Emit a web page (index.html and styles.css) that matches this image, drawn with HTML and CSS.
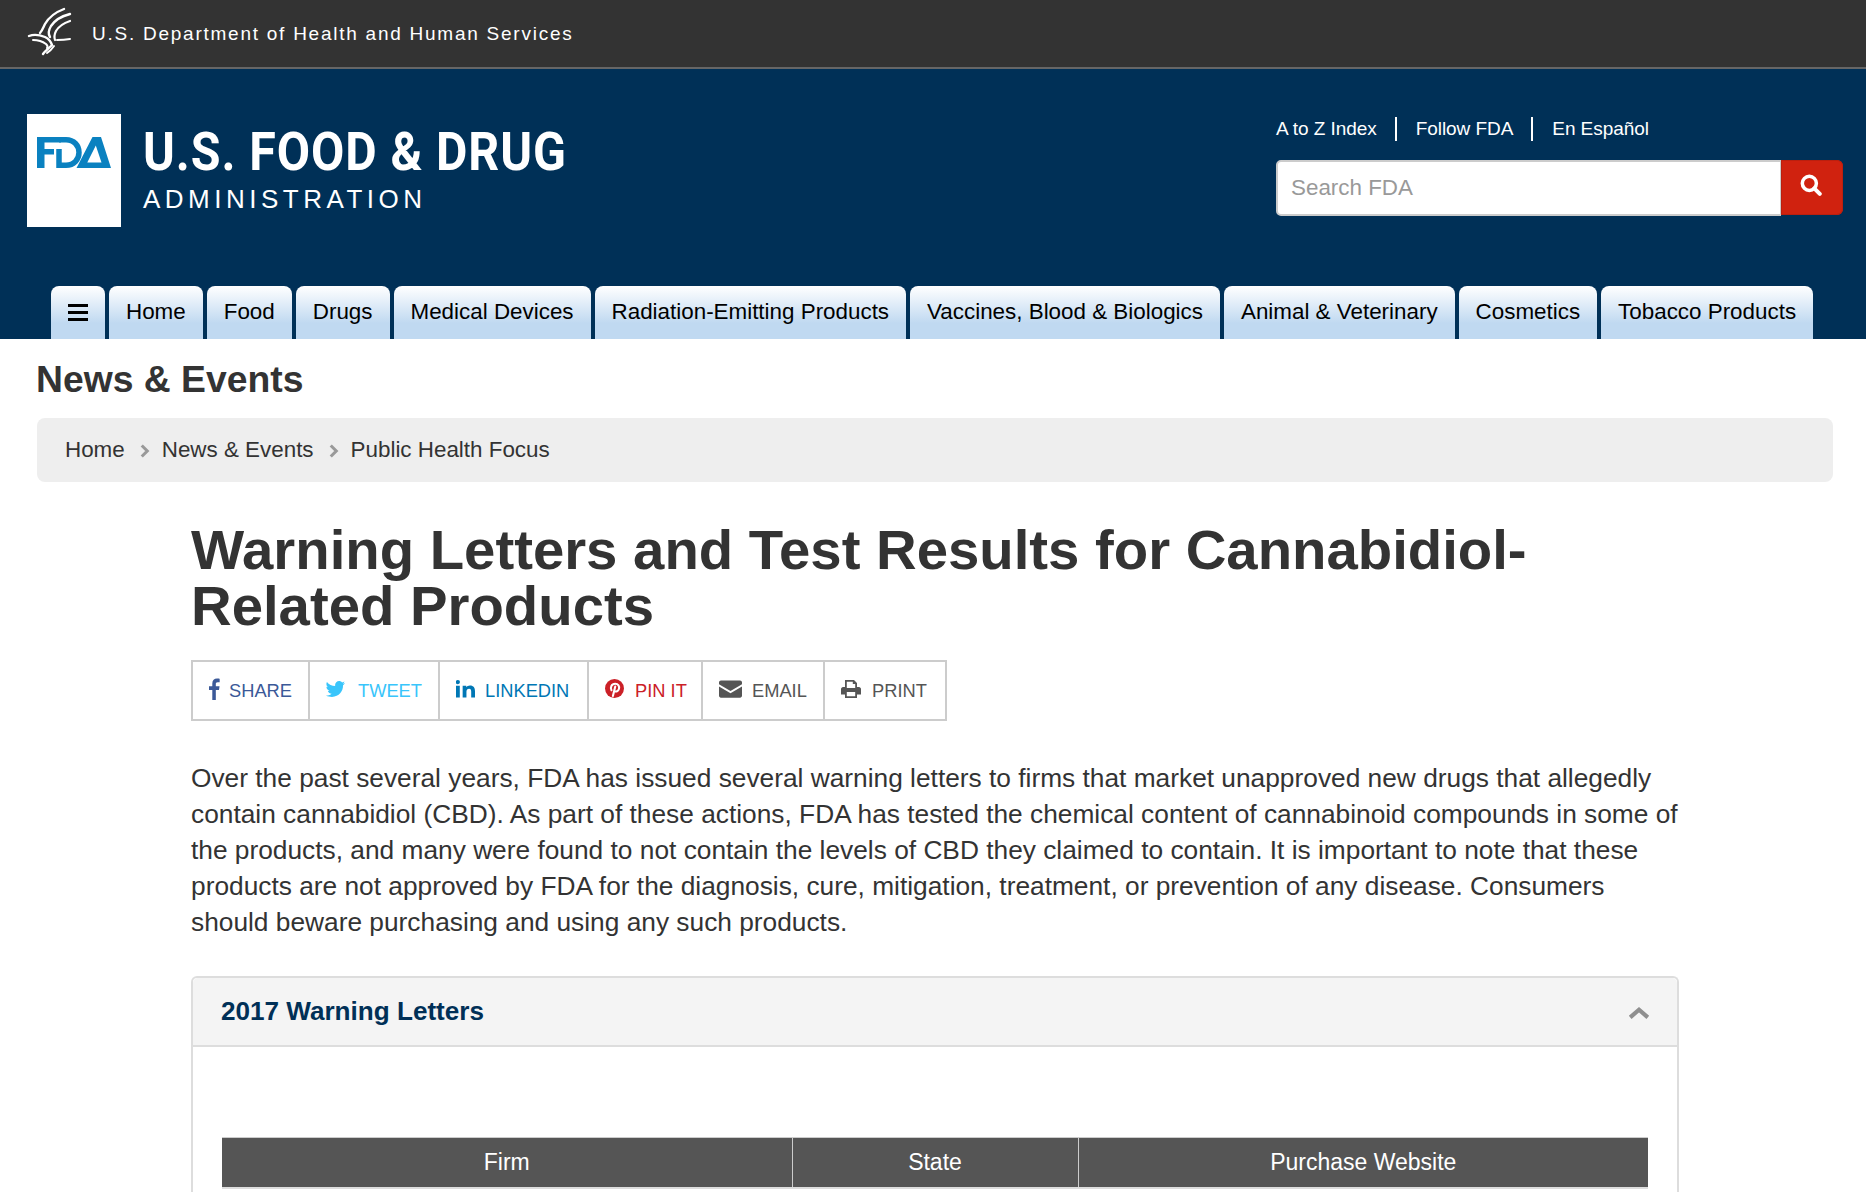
FILE: index.html
```html
<!DOCTYPE html>
<html lang="en">
<head>
<meta charset="utf-8">
<title>Warning Letters and Test Results for Cannabidiol-Related Products</title>
<link rel="stylesheet" href="styles.css">
</head>
<body>
<div class="hhs-bar">
  <svg class="eagle" viewBox="0 0 60 60" aria-hidden="true">
    <g fill="none" stroke="#fff" stroke-linecap="round" stroke-linejoin="round">
      <path d="M44 5C36 8 29 13 25 20C23 24 22 27 20 29" stroke-width="2.400"/>
      <path d="M50 10C42 12 35 16 31 22C28 27 28 30 30 33" stroke-width="2.400"/>
      <path d="M50 17C44 19 39 22 36 27C34 31 34 33 35 36" stroke-width="2.200"/>
      <path d="M9 32C14 30 20 31 25 33C29 35 31 38 32 41" stroke-width="2.400"/>
      <path d="M13 36C18 36 22 37 26 40C28 42 28 43 27 44" stroke-width="2"/>
      <path d="M37 36C41 36 44 36 50 35" stroke-width="2"/>
      <path d="M31 42C28 45 25 47 23 50" stroke-width="2.400"/>
      <path d="M34 42C32 45 30 47 27 49" stroke-width="2"/>
    </g>
  </svg>
  <span class="hhs-name">U.S. Department of Health and Human Services</span>
</div>

<header class="masthead">
  <div class="masthead-top">
    <div class="brand">
      <div class="logo-box">
        <svg class="logo-fda" viewBox="0 0 74 31" aria-hidden="true">
          <path fill="#0a81c0" d="M0 0H24V5.500H7.500V12H17V17.500H7.500V31H0Z"/>
          <path fill="none" stroke="#0a81c0" stroke-width="5.500" d="M22 12V28.200H29C37 28.200 42 22.500 42 15.500C42 8.500 37 2.800 29 2.800H22"/>
          <path fill="#0a81c0" d="M55.500 0H64L74 31H46L48.500 25.500H64.500L58.800 8.500L47.500 31H39.500Z"/>
        </svg>
      </div>
      <div class="brand-text">
        <div class="brand-title">U.S. FOOD &amp; DRUG</div>
        <div class="brand-sub">ADMINISTRATION</div>
      </div>
    </div>
    <div class="tools">
      <nav class="tool-links">
        <a>A to Z Index</a>
        <a>Follow FDA</a>
        <a>En Español</a>
      </nav>
      <form class="search">
        <div class="search-input">Search FDA</div>
        <div class="search-btn">
          <svg viewBox="0 0 20 20" class="search-icon" aria-hidden="true">
            <circle cx="8.500" cy="8.500" r="6.400" fill="none" stroke="#fff" stroke-width="3.200"/>
            <path d="M13 13L18 18" stroke="#fff" stroke-width="3.600" stroke-linecap="round"/>
          </svg>
        </div>
      </form>
    </div>
  </div>
  <nav class="tabs">
    <a class="tab tab-menu" aria-label="Menu"><span class="burger"></span></a>
    <a class="tab">Home</a>
    <a class="tab">Food</a>
    <a class="tab">Drugs</a>
    <a class="tab">Medical Devices</a>
    <a class="tab">Radiation-Emitting Products</a>
    <a class="tab">Vaccines, Blood &amp; Biologics</a>
    <a class="tab">Animal &amp; Veterinary</a>
    <a class="tab">Cosmetics</a>
    <a class="tab">Tobacco Products</a>
  </nav>
</header>

<div class="section">
  <h2 class="section-title">News &amp; Events</h2>
  <div class="crumbs">
    <a>Home</a>
    <svg class="crumb-sep" viewBox="0 0 10 14" aria-hidden="true"><path d="M2.500 2L7.500 7L2.500 12" fill="none" stroke="#999" stroke-width="2.800"/></svg>
    <a>News &amp; Events</a>
    <svg class="crumb-sep" viewBox="0 0 10 14" aria-hidden="true"><path d="M2.500 2L7.500 7L2.500 12" fill="none" stroke="#999" stroke-width="2.800"/></svg>
    <a>Public Health Focus</a>
  </div>
</div>

<main class="content">
  <h1 class="page-title">Warning Letters and Test Results for Cannabidiol-Related Products</h1>
  <ul class="share">
    <li class="share-item share-fb">
      <svg class="si si-fb" viewBox="0 0 10 20" aria-hidden="true"><path fill="currentColor" d="M3 20V11H0V7.500H3V5C3 2 4.800 .5 7.300 .5C8.500 .5 9.400 .6 9.700 .7V3.800H7.900C6.500 3.800 6.200 4.500 6.200 5.500V7.500H9.600L9.100 11H6.200V20Z"/></svg>SHARE</li>
    <li class="share-item share-tw">
      <svg class="si si-tw" viewBox="0 0 24 20" aria-hidden="true"><path fill="currentColor" d="M24 2.400C23.100 2.800 22.200 3.100 21.200 3.200C22.200 2.600 23 1.600 23.400 .5C22.400 1 21.400 1.400 20.300 1.700C19.400 .7 18.100 0 16.600 0C13.800 0 11.500 2.300 11.500 5.100C11.500 5.500 11.500 5.900 11.600 6.300C7.400 6.100 3.700 4.100 1.200 1C.8 1.800 .5 2.600 .5 3.600C.5 5.400 1.400 6.900 2.800 7.800C2 7.800 1.200 7.600 .5 7.200V7.300C.5 9.800 2.300 11.800 4.600 12.300C3.800 12.500 3 12.500 2.300 12.400C3 14.400 4.900 15.900 7.100 15.900C4.400 18 1.700 18.500 0 18.300C2.300 19.700 4.800 20 7.500 20C16.600 20 21.500 12.500 21.500 6C21.500 5.800 21.500 5.600 21.500 5.400C22.500 4.700 23.400 3.600 24 2.400Z"/></svg>TWEET</li>
    <li class="share-item share-li">
      <svg class="si si-li" viewBox="0 0 20 20" aria-hidden="true"><path fill="currentColor" d="M0 6.500H4V19H0ZM2 .5A2.200 2.200 0 1 1 2 4.900A2.200 2.200 0 1 1 2 .5ZM7 6.500H10.800V8.200C11.500 7 13 6.200 14.700 6.200C18.600 6.200 20 8.500 20 12.300V19H16V13C16 11 15.500 9.700 13.800 9.700C12 9.700 11 10.900 11 13V19H7Z"/></svg>LINKEDIN</li>
    <li class="share-item share-pin">
      <svg class="si si-pin" viewBox="0 0 20 20" aria-hidden="true"><circle cx="10" cy="10" r="10" fill="currentColor"/><path fill="none" stroke="#fff" stroke-width="2.200" stroke-linecap="round" d="M6.800 11.800C5.300 9 6.800 5 10.700 5C14 5 15.400 7.600 14.700 10.300C14 13 11.500 14 10 12.500M10.800 8L8.300 18"/></svg>PIN IT</li>
    <li class="share-item share-mail">
      <svg class="si si-mail" viewBox="0 0 24 20" aria-hidden="true"><path fill="currentColor" d="M2 1H22C23 1 24 2 24 3V5L12 12L0 5V3C0 2 1 1 2 1ZM0 7.500L12 14.500L24 7.500V17C24 18 23 19 22 19H2C1 19 0 18 0 17Z"/></svg>EMAIL</li>
    <li class="share-item share-print">
      <svg class="si si-print" viewBox="0 0 20 20" aria-hidden="true"><path fill="currentColor" fill-rule="evenodd" d="M4 1H13L16 4V8H18C19 8 20 9 20 10V15.500H16V19H4V15.500H0V10C0 9 1 8 2 8H4ZM5.800 2.800V9H14.200V5H11.800V2.800ZM5.800 13V17.200H14.200V13Z"/></svg>PRINT</li>
  </ul>
  <p class="intro">Over the past several years, FDA has issued several warning letters to firms that market unapproved new drugs that allegedly contain cannabidiol (CBD). As part of these actions, FDA has tested the chemical content of cannabinoid compounds in some of the products, and many were found to not contain the levels of CBD they claimed to contain. It is important to note that these products are not approved by FDA for the diagnosis, cure, mitigation, treatment, or prevention of any disease. Consumers should beware purchasing and using any such products.</p>
  <section class="panel">
    <div class="panel-head">
      <h3 class="panel-title">2017 Warning Letters</h3>
      <svg class="chevron" viewBox="0 0 20 12" aria-hidden="true"><path d="M2 10L10 3L18 10" fill="none" stroke="#8f8f8f" stroke-width="3.800"/></svg>
    </div>
    <div class="panel-body">
      <table class="letters">
        <thead>
          <tr>
            <th class="col-firm">Firm</th>
            <th class="col-state">State</th>
            <th class="col-site">Purchase Website</th>
          </tr>
        </thead>
      </table>
    </div>
  </section>
</main>
</body>
</html>
```
FILE: styles.css
```css
* { box-sizing: border-box; }
html, body { margin: 0; height: 100%; overflow: hidden; }
body { background: #fff; color: #333; font-family: "Liberation Sans", Arial, sans-serif; font-size: 22.4px; }
a { color: inherit; text-decoration: none; }

.hhs-bar { height: 69px; background: #333; border-bottom: 2px solid #666; display: flex; align-items: center; padding-left: 20px; gap: 12px; }
.eagle { width: 60px; height: 60px; flex: none; }
.hhs-name { color: #fff; font-size: 19px; letter-spacing: 1.75px; }

.masthead { background: #003057; height: 270px; display: flex; flex-direction: column; justify-content: space-between; }
.masthead-top { display: flex; justify-content: space-between; padding: 45px 23px 0 27px; }
.brand { display: flex; }
.logo-box { width: 94px; height: 113px; background: #fff; padding: 23px 0 0 10px; flex: none; }
.logo-fda { display: block; width: 74px; height: 31px; }
.brand-text { margin-left: 22px; color: #fff; }
.brand-title { font-family: Roboto, "Liberation Sans", sans-serif; font-weight: 700; font-size: 53px; line-height: 60px; letter-spacing: 1px; margin-top: 8px; white-space: nowrap; transform: scaleX(.912); transform-origin: left center; }
.brand-sub { font-size: 26px; line-height: 30px; letter-spacing: 4.5px; margin-top: 2px; }

.tools { width: 567px; }
.tool-links { display: flex; color: #fff; font-size: 19px; letter-spacing: -.06px; line-height: 24px; margin-top: 3px; }
.tool-links a { padding: 0 18px 0 19px; border-left: 2px solid #fff; }
.tool-links a:first-child { border-left: 0; padding-left: 0; }
.search { display: flex; margin-top: 19px; }
.search-input { width: 505px; height: 56px; background: #fff; border: 2px solid #ccc; border-right-width: 1px; border-radius: 5px 0 0 5px; padding: 0 13px; color: #999; line-height: 51px; font-size: 22.400px; }
.search-btn { width: 62px; height: 55px; background: #d0220f; border-radius: 0 6px 6px 0; display: flex; align-items: center; justify-content: center; padding: 0 2px 5px 0; box-shadow: inset 0 0 0 1px #bb1f0e; }
.search-icon { width: 22px; height: 22px; }

.tabs { display: flex; gap: 4px; padding-left: 51px; }
.tab { height: 53px; padding: 0 17px; background: linear-gradient(#fff 0, #c0d9f1 70%); border-radius: 8px 8px 0 0; color: #000; font-size: 22.400px; line-height: 52px; white-space: nowrap; }
.tab-menu { width: 54px; padding: 0; display: flex; align-items: center; justify-content: center; }
.burger { display: block; width: 20px; height: 17px; border-top: 3px solid #000; border-bottom: 3px solid #000; position: relative; }
.burger::after { content: ""; position: absolute; left: 0; right: 0; top: 4px; height: 3px; background: #000; }

.section { padding: 0 33px 0 37px; }
.section-title { margin: 0 0 0 -1px; padding-top: 20px; font-size: 37.300px; line-height: 40px; font-weight: 700; color: #333; }
.crumbs { margin-top: 19px; height: 64px; background: #eee; border-radius: 8px; display: flex; align-items: center; padding-left: 28px; font-size: 22.400px; color: #333; }
.crumb-sep { width: 11px; height: 16px; margin: 2px 12px 0 14px; flex: none; }

.content { width: 1490px; margin-left: 191px; }
.page-title { margin: 40px 0 0; font-size: 56.300px; line-height: 56px; font-weight: 700; color: #333; }
.share { list-style: none; display: flex; width: 756px; margin: 26px 0 0; padding: 0; border: 2px solid #ccc; height: 61px; }
.share-item { display: flex; align-items: center; padding-left: 16px; font-size: 18.300px; border-left: 2px solid #ccc; height: 100%; }
.share-item:first-child { border-left: 0; }
.si { width: 10px; height: 20px; margin-right: 12px; flex: none; position: relative; top: -2px; }
.si-fb { width: 11px; height: 22px; margin-right: 9px; }
.si-tw { width: 19px; margin-right: 13px; }
.si-li { width: 19px; margin-right: 10px; }
.si-pin { width: 19px; height: 19px; margin-right: 11px; }
.si-mail { width: 23px; margin-right: 10px; }
.si-print { width: 20px; margin-right: 11px; }
.share-fb { width: 115px; color: #3b5998; }
.share-tw { width: 130px; color: #39c5fb; }
.share-li { width: 149px; color: #0077b5; }
.share-pin { width: 114px; color: #cb2027; }
.share-mail { width: 122px; color: #555; }
.share-print { width: 122px; color: #555; }

.intro { width: 1490px; margin: 39px 0 0; font-size: 26.300px; line-height: 36px; color: #333; }

.panel { width: 1488px; margin-top: 36px; border: 2px solid #ddd; border-bottom: 0; border-radius: 6px 6px 0 0; height: 216px; overflow: hidden; }
.panel-head { height: 69px; background: #f4f4f4; border-bottom: 2px solid #ddd; display: flex; align-items: center; justify-content: space-between; padding: 0 27px 0 28px; border-radius: 5px 5px 0 0; }
.panel-title { margin: 0; color: #003057; font-size: 26.100px; font-weight: 700; }
.chevron { width: 22px; height: 14px; margin-top: 3px; }
.panel-body { padding: 90px 29px 0 29px; }
.letters { width: 1426px; border-collapse: collapse; table-layout: fixed; border-top: 1px solid #ccc; border-bottom: 2px solid #ddd; }
.letters th { height: 50px; background: #555; color: #fff; font-size: 23px; font-weight: 400; border-right: 1px solid #ccc; padding: 0; }
.letters th:last-child { border-right: 0; }
.col-firm { width: 570px; }
.col-state { width: 286px; }
.col-site { width: 570px; }
```
